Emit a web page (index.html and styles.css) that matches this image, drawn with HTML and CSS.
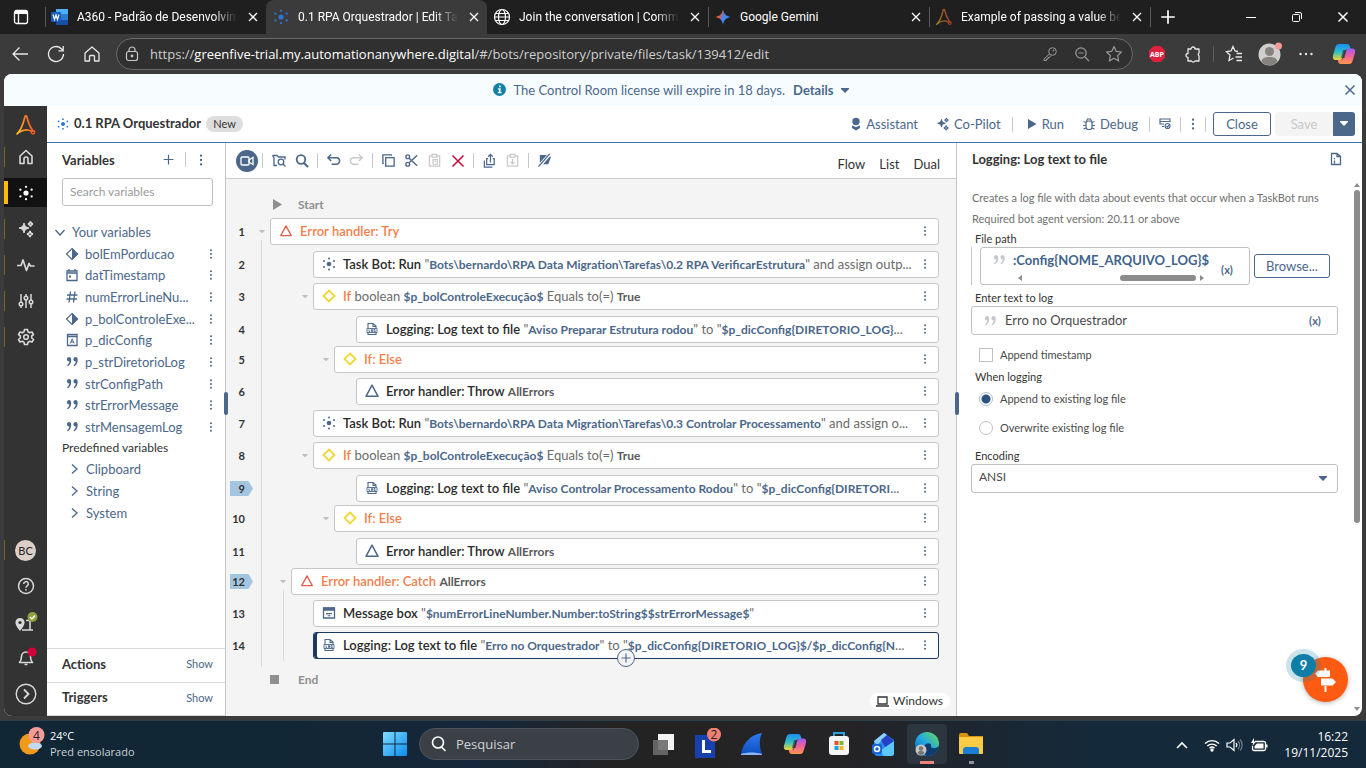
FILE: index.html
```
<!DOCTYPE html>
<html lang="pt-BR">
<head>
    <meta charset="UTF-8">
    <meta name="viewport" content="width=device-width, initial-scale=1.0">
    <title>0.1 RPA Orquestrador | Edit Task Bot</title>
    <link rel="stylesheet" href="styles.css">
</head>
<body>
    <!-- Icons -->
    <svg class="sprite" xmlns="http://www.w3.org/2000/svg">
        <defs>
            <linearGradient id="g-logo" x1="0" y1="0.6" x2="1" y2="0.4"><stop offset="0" stop-color="#ffb81c"/><stop offset="1" stop-color="#f05a28"/></linearGradient>
            <linearGradient id="g-gem" x1="0" y1="0.3" x2="1" y2="0.7"><stop offset="0" stop-color="#f4c20d"/><stop offset="0.3" stop-color="#f4503c"/><stop offset="0.5" stop-color="#4285f4"/><stop offset="1" stop-color="#3a8df0"/></linearGradient>
            <linearGradient id="g-win" x1="0" y1="0" x2="1" y2="1"><stop offset="0" stop-color="#7fdcff"/><stop offset="1" stop-color="#0a8cf0"/></linearGradient>
            <linearGradient id="g-cop1" x1="0" y1="0" x2="0" y2="1"><stop offset="0" stop-color="#1a8cf0"/><stop offset="0.5" stop-color="#2cc0c8"/><stop offset="1" stop-color="#f5d430"/></linearGradient>
            <linearGradient id="g-cop2" x1="0" y1="0" x2="0" y2="1"><stop offset="0" stop-color="#a05af0"/><stop offset="0.5" stop-color="#f0609a"/><stop offset="1" stop-color="#ff9a4a"/></linearGradient>
            <linearGradient id="g-edge" x1="0" y1="1" x2="1" y2="0"><stop offset="0" stop-color="#0a5fb8"/><stop offset="0.5" stop-color="#22a8e0"/><stop offset="1" stop-color="#6ee04a"/></linearGradient>
            <linearGradient id="g-fin" x1="0" y1="0" x2="0" y2="1"><stop offset="0" stop-color="#2f7bf0"/><stop offset="1" stop-color="#0d4fc0"/></linearGradient>
        </defs>
        <symbol id="i-x" viewBox="0 0 16 16"><path d="M4 4l8 8M12 4l-8 8" fill="none" stroke="currentColor" stroke-width="1.3"/></symbol>
        <symbol id="i-bot" viewBox="0 0 16 16"><g fill="currentColor"><circle cx="8" cy="8" r="2.3"/><circle cx="8" cy="2.5" r="1"/><circle cx="8" cy="13.5" r="1"/><circle cx="3" cy="5" r="1"/><circle cx="13" cy="5" r="1"/><circle cx="3" cy="11" r="1"/><circle cx="13" cy="11" r="1"/></g></symbol>
        <symbol id="i-logo" viewBox="0 0 20 22"><path d="M1 20C4 17 7.500 9 9 2.500c.3-1 1.500-1 1.800 0C12 8 14 13 17 17M1 20c3-3 9-6 15-2.500" fill="none" stroke="url(#g-logo)" stroke-width="1.700" stroke-linecap="round"/><circle cx="17" cy="18.300" r="1.700" fill="none" stroke="#f05a28" stroke-width="1.500"/></symbol>
        <symbol id="i-dots" viewBox="0 0 16 16"><g fill="currentColor"><circle cx="8" cy="3" r="1.300"/><circle cx="8" cy="8" r="1.300"/><circle cx="8" cy="13" r="1.300"/></g></symbol>
        <symbol id="i-plus" viewBox="0 0 16 16"><path d="M8 2v12M2 8h12" fill="none" stroke="currentColor" stroke-width="1.500"/></symbol>
        <symbol id="i-caret" viewBox="0 0 8 6"><path d="M0 0h8v1L4 5 0 1z" fill="currentColor"/></symbol>
        <symbol id="i-down" viewBox="0 0 12 12"><path d="M1.500 4L6 9l4.500-5" fill="none" stroke="currentColor" stroke-width="1.300"/></symbol>
        <symbol id="i-right" viewBox="0 0 12 12"><path d="M4 1.500L9 6l-5 4.500" fill="none" stroke="currentColor" stroke-width="1.300"/></symbol>
        <symbol id="i-search" viewBox="0 0 16 16"><circle cx="7" cy="6.500" r="4.300" fill="none" stroke="currentColor" stroke-width="1.800"/><path d="M10 10l4 4" stroke="currentColor" stroke-width="2.200"/></symbol>
        <symbol id="i-quote" viewBox="0 0 14 12"><path d="M4 1a2.300 2.300 0 1 0 .4 4.600C4.200 7.200 3.400 8.300 2 9.400l.8.900C5 8.800 6.200 6.800 6.200 3.900 6.200 2 5.400 1 4 1zM10.500 1a2.300 2.300 0 1 0 .4 4.600c-.2 1.600-1 2.700-2.400 3.800l.8.900c2.200-1.500 3.400-3.500 3.400-6.400C12.700 2 11.900 1 10.500 1z" fill="currentColor"/></symbol>
        <symbol id="i-bool" viewBox="0 0 14 14"><path d="M7 1.500L12.500 7 7 12.500 1.500 7z" fill="none" stroke="currentColor" stroke-width="1.200"/><path d="M7 1l6 6-6 6z" fill="currentColor"/></symbol>
        <symbol id="i-date" viewBox="0 0 14 14"><path d="M2 3h10v9.500H2zM2 5h10M4 1v2M10 1v2" fill="none" stroke="currentColor" stroke-width="1.300"/><path d="M4 7.500h2v2H4z" fill="currentColor"/></symbol>
        <symbol id="i-hash" viewBox="0 0 14 14"><path d="M5.500 1.500L4 12.500M10 1.500L8.500 12.500M2 5h10.500M1.500 9h10.500" fill="none" stroke="currentColor" stroke-width="1.300"/></symbol>
        <symbol id="i-dict" viewBox="0 0 14 14"><path d="M2.500 1.500h9.500v11H2.500zM2.500 3.500H12" fill="none" stroke="currentColor" stroke-width="1.300"/><path d="M5.300 10.500L7.200 5.800l1.900 4.700M6 9h2.500" fill="none" stroke="currentColor"/></symbol>
        <symbol id="i-tri" viewBox="0 0 16 16"><path d="M8 2.200L14 13.300H2z" fill="none" stroke="currentColor" stroke-width="1.500" stroke-linejoin="round"/></symbol>
        <symbol id="i-diamond" viewBox="0 0 16 16"><path d="M8 2.500L13.500 8 8 13.500 2.500 8z" fill="none" stroke="currentColor" stroke-width="1.800"/></symbol>
        <symbol id="i-log" viewBox="0 0 16 16"><path d="M4 7V2.500h5L12 5v2M9 2.500V5.500h3M4 12v1.500h8V12" fill="none" stroke="currentColor" stroke-width="1.100"/><path d="M3 7.500h10v4H3zM5 8.500v2h1.200M7.500 8.500h1v2h-1zM11.300 8.500H10v2h1.300v-1" fill="none" stroke="currentColor" stroke-width=".9"/></symbol>
        <symbol id="i-msg" viewBox="0 0 16 16"><path d="M2.500 3h11v10h-11z" fill="none" stroke="currentColor" stroke-width="1.300"/><path d="M2 2.500h12v3.300H2zM5 8h6v1.300H5zM6.500 10.300h3v1h-3z" fill="currentColor"/></symbol>
        <symbol id="i-spark" viewBox="0 0 18 18"><path d="M7 3c.6 3 1.800 4.300 5 5-3.200.7-4.400 2-5 5-.6-3-1.800-4.300-5-5 3.200-.7 4.400-2 5-5z" fill="currentColor" stroke="currentColor" stroke-width="1"/><path d="M13.500 1.500c.3 1.500.9 2.200 2.500 2.500-1.600.3-2.200 1-2.500 2.500-.3-1.500-.9-2.200-2.500-2.500 1.600-.3 2.200-1 2.500-2.500zM13 11c.4 1.900 1.100 2.700 3 3-1.900.4-2.600 1.100-3 3-.4-1.900-1.100-2.600-3-3 1.900-.3 2.600-1.100 3-3z" fill="none" stroke="currentColor" stroke-width="1.500"/></symbol>
        <symbol id="i-home" viewBox="0 0 18 18"><path d="M3 8l6-5.500L15 8v7.500h-4V11a2 2 0 0 0-4 0v4.500H3z" fill="none" stroke="currentColor" stroke-width="1.600" stroke-linejoin="round"/></symbol>
        <symbol id="i-copilot" viewBox="0 0 24 24"><path d="M7 2h8c2 0 2.500 1 3 3l.5 2h-3c-1.500 0-2.500 1-3 2.500L10.500 16c-.6 1.500-1.300 2-3 2H4c-3 0-3.500-2-3-4.500L3.500 5C4 3 5 2 7 2z" fill="url(#g-cop1)"/><path d="M17 22H9c-2 0-2.700-1-3-3l-.3-1H8c2 0 3-.8 3.500-2.500L13.500 9c.6-1.600 1.500-2.500 3-2.500H20c3 0 3.500 2 3 4.500L20.500 19c-.5 2-1.500 3-3.500 3z" fill="url(#g-cop2)"/><path d="M11 8h3.500l-2 8H9z" fill="#202430" opacity=".6"/></symbol>
    </svg>

    <!-- Browser tabs -->
    <header class="tabs">
        <button class="tab-actions" aria-label="Tab actions"><svg width="16" height="16" viewBox="0 0 16 16"><path d="M1.500 3.500a2 2 0 0 1 2-2h9a2 2 0 0 1 2 2v9a2 2 0 0 1-2 2h-9a2 2 0 0 1-2-2zM5.500 5v9.500" fill="none" stroke="#fff" stroke-width="1.300"/><path d="M2 2h12v3H2z" fill="#fff"/></svg></button>
        <div class="tab tab-line">
            <svg width="18" height="18" viewBox="0 0 18 18"><path d="M5 1h12v5H5z" fill="#4fb0f5"/><path d="M5 6h12v6H5z" fill="#2b7cd3"/><path d="M5 12h12v5H5z" fill="#174ea6"/><rect x="0" y="4" width="10" height="10" rx="1" fill="#185abd"/><path d="M2 6.500l1.500 5L5 7l1.500 4.500L8 6.500" fill="none" stroke="#fff" stroke-width="1.200"/></svg>
            <span class="tab-title faded">A360 - Padrão de Desenvolvim</span>
            <button class="tab-close" aria-label="Close tab"><svg width="16" height="16"><use href="#i-x"/></svg></button>
        </div>
        <div class="tab tab-active">
            <svg class="c-bot" width="18" height="18"><use href="#i-bot"/></svg>
            <span class="tab-title faded">0.1 RPA Orquestrador | Edit Tas</span>
            <button class="tab-close" aria-label="Close tab"><svg width="16" height="16"><use href="#i-x"/></svg></button>
        </div>
        <div class="tab">
            <svg width="18" height="18" viewBox="0 0 18 18" fill="none" stroke="#fff" stroke-width="1.200"><circle cx="9" cy="9" r="7.500"/><ellipse cx="9" cy="9" rx="3.500" ry="7.500"/><path d="M1.500 9h15M2.500 5.500h13M2.500 12.500h13"/></svg>
            <span class="tab-title faded">Join the conversation | Commu</span>
            <button class="tab-close" aria-label="Close tab"><svg width="16" height="16"><use href="#i-x"/></svg></button>
        </div>
        <div class="tab tab-line">
            <svg width="18" height="16" viewBox="0 0 18 16"><path d="M9 0c.8 5 3 7.200 8 8-5 .8-7.200 3-8 8-.8-5-3-7.200-8-8 5-.8 7.200-3 8-8z" fill="url(#g-gem)"/></svg>
            <span class="tab-title">Google Gemini</span>
            <button class="tab-close" aria-label="Close tab"><svg width="16" height="16"><use href="#i-x"/></svg></button>
        </div>
        <div class="tab tab-line">
            <svg class="dim" width="18" height="18"><use href="#i-logo"/></svg>
            <span class="tab-title faded">Example of passing a value be</span>
            <button class="tab-close" aria-label="Close tab"><svg width="16" height="16"><use href="#i-x"/></svg></button>
        </div>
        <button class="new-tab tab-line" aria-label="New tab"><svg width="18" height="18"><use href="#i-plus"/></svg></button>
        <div class="win-controls">
            <button aria-label="Minimize"><svg width="12" height="12" viewBox="0 0 12 12"><path d="M1 6.500h10" stroke="#fff"/></svg></button>
            <button aria-label="Restore"><svg width="12" height="12" viewBox="0 0 12 12" fill="none" stroke="#fff"><rect x="1.500" y="3.500" width="7" height="7" rx="1"/><path d="M4 1.500h5a1.500 1.500 0 0 1 1.500 1.500v5"/></svg></button>
            <button aria-label="Close window"><svg width="18" height="18"><use href="#i-x"/></svg></button>
        </div>
    </header>

    <!-- Address bar -->
    <div class="toolbar">
        <button class="tool" aria-label="Back"><svg width="18" height="18" viewBox="0 0 18 18" fill="none" stroke="currentColor" stroke-width="1.300"><path d="M17 9H2M8.500 2.500L2 9l6.500 6.500"/></svg></button>
        <button class="tool" aria-label="Refresh"><svg width="18" height="18" viewBox="0 0 18 18" fill="none" stroke="currentColor" stroke-width="1.300"><path d="M16.500 9a7.500 7.500 0 1 1-2.200-5.300L16 5.500M16.200 1v4.800h-4.800"/></svg></button>
        <button class="tool" aria-label="Home"><svg width="18" height="18" viewBox="0 0 18 18" fill="none" stroke="currentColor" stroke-width="1.300" stroke-linejoin="round"><path d="M2 8l7-6 7 6v8h-4.500v-4.500a1 1 0 0 0-1-1h-3a1 1 0 0 0-1 1V16H2z"/></svg></button>
        <div class="address">
            <svg class="lock" width="16" height="16" viewBox="0 0 16 16" fill="none" stroke="currentColor" stroke-width="1.200"><rect x="2.500" y="5.500" width="11" height="9" rx="2"/><path d="M5 5.500V4a3 3 0 0 1 6 0v1.500"/><circle cx="8" cy="10" r=".8" fill="currentColor"/></svg>
            <div class="url"><span>https://</span>greenfive-trial.my.automationanywhere.digital<span>/#/bots/repository/private/files/task/139412/edit</span></div>
            <button aria-label="Passwords"><svg width="16" height="16" viewBox="0 0 16 16" fill="none" stroke="currentColor"><circle cx="10.500" cy="5.500" r="3.800"/><path d="M7.500 8l-5.500 5v1.500h2.500v-1.500H6v-1.500h1.500L9 9.500"/><circle cx="11.500" cy="4.500" r=".5"/></svg></button>
            <button aria-label="Zoom"><svg width="16" height="16" viewBox="0 0 16 16" fill="none" stroke="currentColor" stroke-width="1.200"><circle cx="7" cy="7" r="5.200"/><path d="M4.500 7h5M11 11l4 4"/></svg></button>
            <button aria-label="Add to favorites"><svg width="18" height="18" viewBox="0 0 18 18" fill="none" stroke="currentColor" stroke-width="1.200" stroke-linejoin="round"><path d="M9 1.500l2.300 4.900 5.200.6-3.900 3.600 1.100 5.400L9 13.300 4.300 16l1.100-5.400L1.500 7l5.200-.6z"/></svg></button>
        </div>
        <button class="tool" aria-label="Adblock Plus"><svg width="18" height="18" viewBox="0 0 18 18"><path d="M5.500 1h7L17 5.500v7L12.500 17h-7L1 12.500v-7z" fill="#e0203f"/><text x="9" y="12" class="abp">ABP</text></svg></button>
        <button class="tool" aria-label="Extensions"><svg width="18" height="18" viewBox="0 0 18 18" fill="none" stroke="currentColor" stroke-width="1.300" stroke-linejoin="round"><path d="M4 4h3a2 2 0 0 1 4 0h4v4a2 2 0 0 0 0 3v5h-4a2 2 0 0 1-3.500 0H4v-3.500a2 2 0 0 1 0-4z"/></svg></button>
        <span class="sep-dark"></span>
        <button class="tool" aria-label="Favorites"><svg width="18" height="18" viewBox="0 0 18 18" fill="none" stroke="currentColor" stroke-width="1.300"><path d="M13 6.500l-3-.5L8 1.500 6 6l-4.500.6L5 10l-1 5.500 4.500-2.500M11.500 8.500H17M10.500 12H17M11.500 15.500H17"/></svg></button>
        <button class="tool" aria-label="Profile"><svg width="24" height="24" viewBox="0 0 24 24"><circle cx="11.500" cy="12.500" r="11" fill="#d0cfcd"/><circle cx="11.500" cy="9.500" r="4.500" fill="#85827f"/><path d="M3.500 19.500c1-4 4-4.500 8-4.500s7 .5 8 4.500c-4 5-12 5-16 0z" fill="#85827f"/><circle cx="20.500" cy="4" r="3.500" fill="#f59a94"/></svg></button>
        <button class="tool" aria-label="Settings and more"><svg width="16" height="16" viewBox="0 0 16 16" fill="currentColor"><circle cx="2.500" cy="8" r="1.200"/><circle cx="8" cy="8" r="1.200"/><circle cx="13.500" cy="8" r="1.200"/></svg></button>
        <button class="tool" aria-label="Copilot"><svg width="24" height="24"><use href="#i-copilot"/></svg></button>
    </div>

    <!-- Control Room -->
    <div class="app">
        <div class="banner">
            <svg width="13" height="13" viewBox="0 0 13 13"><circle cx="6.500" cy="6.500" r="6.500" fill="#1181a8"/><path d="M6 2.500h1.700v1.700H6zM5 5.300h2.600v3.600h1v1.300H4.800V8.900h1V6.500H5z" fill="#fff"/></svg>
            <span>The Control Room license will expire in 18 days.</span>
            <a href="#">Details</a>
            <svg class="caret" width="8" height="6"><use href="#i-caret"/></svg>
            <button aria-label="Dismiss"><svg width="18" height="18"><use href="#i-x"/></svg></button>
        </div>

        <div class="workspace">
            <nav class="rail">
                <a class="rail-logo" href="#" aria-label="Automation Anywhere"><svg width="20" height="22"><use href="#i-logo"/></svg></a>
                <a class="rail-item marked" href="#" aria-label="Home"><svg width="18" height="18"><use href="#i-home"/></svg></a>
                <a class="rail-item current" href="#" aria-label="Automation"><svg width="18" height="18"><use href="#i-bot"/></svg></a>
                <a class="rail-item marked" href="#" aria-label="AI"><svg width="18" height="18"><use href="#i-spark"/></svg></a>
                <a class="rail-item marked" href="#" aria-label="Activity"><svg width="18" height="18" viewBox="0 0 18 18"><path d="M0 9.500h4l2-5.500 3.500 10.500 2.500-7 1.500 2.500h4" fill="none" stroke="currentColor" stroke-width="1.700" stroke-linejoin="round"/></svg></a>
                <a class="rail-item marked" href="#" aria-label="Manage"><svg width="18" height="18" viewBox="0 0 18 18" fill="none" stroke="currentColor" stroke-width="1.500"><path d="M4 2v8M4 14v2M9 2v2M9 8v8M14 2v6M14 12v4"/><circle cx="4" cy="12" r="1.800"/><circle cx="9" cy="6" r="1.800"/><circle cx="14" cy="10" r="1.800"/></svg></a>
                <a class="rail-item marked" href="#" aria-label="Administration"><svg width="18" height="18" viewBox="0 0 18 18" fill="none" stroke="currentColor" stroke-width="1.600" stroke-linejoin="round"><path d="M7.500 1.500h3l.5 2.300 1.700 1 2.300-.8 1.500 2.600L14.700 8v2l1.800 1.500L15 14l-2.300-.7-1.700 1-.5 2.200h-3L7 14.300l-1.700-1L3 14l-1.500-2.500L3.300 10V8L1.500 6.600 3 4l2.300.8 1.700-1z"/><circle cx="9" cy="9" r="2.300"/></svg></a>
                <a class="rail-item marked rail-bottom" href="#"><span class="avatar">BC</span></a>
                <a class="rail-item" href="#" aria-label="Help"><svg width="18" height="18" viewBox="0 0 18 18" fill="none" stroke="currentColor" stroke-width="1.500"><circle cx="9" cy="9" r="7.500"/><path d="M6.700 7a2.300 2.300 0 1 1 3.500 1.900C9.400 9.400 9 9.700 9 10.700M9 12v1.600"/></svg></a>
                <a class="rail-item" href="#" aria-label="Pathfinder"><svg width="24" height="22" viewBox="0 0 24 22"><path d="M6 7a4.600 4.600 0 0 1 4.600 4.600C10.600 15 6 20 6 20s-4.600-5-4.600-8.400A4.600 4.600 0 0 1 6 7z" fill="currentColor"/><circle cx="6" cy="11.500" r="1.600" fill="#333"/><path d="M8 19h11M12 9.500h4V19" fill="none" stroke="currentColor" stroke-width="1.600"/><circle cx="18.500" cy="6" r="5" fill="#8ba33a"/><path d="M16 6l2 2 3-3.500" fill="none" stroke="#fff" stroke-width="1.400"/></svg></a>
                <a class="rail-item" href="#" aria-label="Notifications"><svg width="22" height="22" viewBox="0 0 22 22"><path d="M4.500 15.500c1.500-1.500 2-3 2-6a4.500 4.500 0 0 1 9 0c0 3 .5 4.500 2 6zM9.500 17.500h3" fill="none" stroke="currentColor" stroke-width="1.600" stroke-linejoin="round"/><circle cx="17" cy="5" r="4.500" fill="#d50037"/></svg></a>
                <a class="rail-item" href="#" aria-label="Expand"><svg width="22" height="22" viewBox="0 0 22 22" fill="none" stroke="currentColor" stroke-width="1.400"><circle cx="11" cy="11" r="9.800"/><path d="M9 6.500l4.500 4.500L9 15.500" stroke-width="1.800"/></svg></a>
            </nav>

            <main class="editor">
                <div class="editor-head">
                    <svg class="c-bot" width="14" height="14"><use href="#i-bot"/></svg>
                    <h1>0.1 RPA Orquestrador</h1>
                    <span class="pill">New</span>
                    <div class="head-actions">
                        <button class="link-btn"><svg width="12" height="14" viewBox="0 0 12 14" fill="currentColor"><circle cx="6" cy="4.500" r="3.700"/><path d="M2 8.500l4 1.500 4-1.500v2.500l-4 2.500-4-2.500z"/></svg>Assistant</button>
                        <button class="link-btn"><svg width="14" height="14"><use href="#i-spark"/></svg>Co-Pilot</button>
                        <span class="sep sep-text"></span>
                        <button class="link-btn"><svg width="12" height="12" viewBox="0 0 12 12" fill="currentColor"><path d="M2 1l8.500 5L2 11z"/></svg>Run</button>
                        <button class="link-btn"><svg width="14" height="14" viewBox="0 0 14 14" fill="none" stroke="currentColor" stroke-width="1.200"><rect x="4" y="4" width="6" height="8.500" rx="2.500"/><path d="M4.500 4L5.500 2h3l1 2M4 5.500L1.500 4.500M4 8.500H1M4 11l-2.500 1M10 5.500l2.500-1M10 8.500h3M10 11l2.500 1"/></svg>Debug</button>
                        <span class="sep sep-icon"></span>
                        <button class="icon-only icon-wide" aria-label="Validate"><svg width="14" height="14" viewBox="0 0 14 14" fill="none" stroke="currentColor" stroke-width="1.200"><path d="M12 5V2H2v5h4M2 4.500h10M4 9.500h2"/><circle cx="9.500" cy="9" r="2.500"/><path d="M8.500 9l1 1 1.500-2"/></svg></button>
                        <span class="sep"></span>
                        <button class="icon-only" aria-label="More"><svg width="16" height="14"><use href="#i-dots"/></svg></button>
                        <span class="sep"></span>
                        <button class="btn btn-close">Close</button>
                        <button class="btn btn-save" disabled>Save</button>
                        <button class="btn-drop" aria-label="Save options"><svg width="8" height="6"><use href="#i-caret"/></svg></button>
                    </div>
                </div>

                <div class="panels">
                    <aside class="variables">
                        <div class="var-head">
                            <h2>Variables</h2>
                            <button aria-label="Create variable"><svg width="13" height="13"><use href="#i-plus"/></svg></button>
                            <span class="sep"></span>
                            <button aria-label="Variable menu"><svg width="16" height="14"><use href="#i-dots"/></svg></button>
                        </div>
                        <input class="var-search" type="text" placeholder="Search variables" aria-label="Search variables">
                        <div class="var-group"><svg width="12" height="12"><use href="#i-down"/></svg>Your variables</div>
                        <ul class="var-list">
                            <li><svg width="14" height="14"><use href="#i-bool"/></svg><a href="#">bolEmPorducao</a><button aria-label="Options"><svg width="12" height="12"><use href="#i-dots"/></svg></button></li>
                            <li><svg width="14" height="14"><use href="#i-date"/></svg><a href="#">datTimestamp</a><button aria-label="Options"><svg width="12" height="12"><use href="#i-dots"/></svg></button></li>
                            <li><svg width="14" height="14"><use href="#i-hash"/></svg><a href="#">numErrorLineNu...</a><button aria-label="Options"><svg width="12" height="12"><use href="#i-dots"/></svg></button></li>
                            <li><svg width="14" height="14"><use href="#i-bool"/></svg><a href="#">p_bolControleExe...</a><button aria-label="Options"><svg width="12" height="12"><use href="#i-dots"/></svg></button></li>
                            <li><svg width="14" height="14"><use href="#i-dict"/></svg><a href="#">p_dicConfig</a><button aria-label="Options"><svg width="12" height="12"><use href="#i-dots"/></svg></button></li>
                            <li><svg width="14" height="12"><use href="#i-quote"/></svg><a href="#">p_strDiretorioLog</a><button aria-label="Options"><svg width="12" height="12"><use href="#i-dots"/></svg></button></li>
                            <li><svg width="14" height="12"><use href="#i-quote"/></svg><a href="#">strConfigPath</a><button aria-label="Options"><svg width="12" height="12"><use href="#i-dots"/></svg></button></li>
                            <li><svg width="14" height="12"><use href="#i-quote"/></svg><a href="#">strErrorMessage</a><button aria-label="Options"><svg width="12" height="12"><use href="#i-dots"/></svg></button></li>
                            <li><svg width="14" height="12"><use href="#i-quote"/></svg><a href="#">strMensagemLog</a><button aria-label="Options"><svg width="12" height="12"><use href="#i-dots"/></svg></button></li>
                        </ul>
                        <h3>Predefined variables</h3>
                        <ul class="pre-list">
                            <li><svg width="12" height="12"><use href="#i-right"/></svg><a href="#">Clipboard</a></li>
                            <li><svg width="12" height="12"><use href="#i-right"/></svg><a href="#">String</a></li>
                            <li><svg width="12" height="12"><use href="#i-right"/></svg><a href="#">System</a></li>
                        </ul>
                        <div class="fold fold-first"><h2>Actions</h2><a href="#">Show</a></div>
                        <div class="fold"><h2>Triggers</h2><a href="#">Show</a></div>
                        <span class="grip"></span>
                    </aside>

                    <section class="flow">
                        <div class="flow-bar">
                            <button class="rec" aria-label="Record"><svg width="14" height="10" viewBox="0 0 14 10" fill="none" stroke="#fff" stroke-width="1.300"><rect x="1" y="1" width="8" height="8" rx="1"/><path d="M9 4l4-2.500v7L9 6z"/></svg></button>
                            <span class="sep"></span>
                            <button aria-label="Find in files"><svg width="16" height="16" viewBox="0 0 16 16" fill="none" stroke="currentColor" stroke-width="1.300"><path d="M6 12.500H3V4.500M1.500 2.500H6l1.500 1.500H14v2.500M1.500 2.500L3 5"/><circle cx="10" cy="9" r="2.800"/><path d="M12 11l2.500 2.500"/></svg></button>
                            <button aria-label="Find"><svg width="16" height="16"><use href="#i-search"/></svg></button>
                            <span class="sep"></span>
                            <button aria-label="Undo"><svg width="15" height="15" viewBox="0 0 16 16" fill="none" stroke="currentColor" stroke-width="1.600"><path d="M2 5h9a3.500 3.500 0 0 1 0 7H6M5.500 1.500L2 5l3.500 3.500"/></svg></button>
                            <button class="off" aria-label="Redo"><svg width="15" height="15" viewBox="0 0 16 16" fill="none" stroke="currentColor" stroke-width="1.600"><path d="M14 5H5a3.500 3.500 0 0 0 0 7h5M10.500 1.500L14 5l-3.500 3.500"/></svg></button>
                            <span class="sep"></span>
                            <button aria-label="Copy"><svg width="15" height="15" viewBox="0 0 16 16" fill="none" stroke="currentColor" stroke-width="1.400"><rect x="5" y="5" width="9" height="9"/><path d="M3 11H2V2h9v1"/></svg></button>
                            <button aria-label="Cut"><svg width="15" height="15" viewBox="0 0 16 16" fill="none" stroke="currentColor" stroke-width="1.500"><circle cx="4" cy="4" r="2"/><circle cx="4" cy="12" r="2"/><path d="M5.500 5.500L14 13.500M5.500 10.500L14 2.500"/></svg></button>
                            <button class="off" aria-label="Paste"><svg width="15" height="15" viewBox="0 0 16 16" fill="none" stroke="currentColor" stroke-width="1.300"><path d="M5 3H2.500v11h11V3H11M5.500 1.500h5v3h-5z"/><path d="M6.500 7h4.500v5H6.500zM8 9h1.500"/></svg></button>
                            <button class="del" aria-label="Delete"><svg width="16" height="16" viewBox="0 0 16 16"><path d="M2.500 2.500l11 11M13.500 2.500l-11 11" stroke="currentColor" stroke-width="1.600"/></svg></button>
                            <span class="sep"></span>
                            <button aria-label="Share"><svg width="15" height="15" viewBox="0 0 16 16" fill="none" stroke="currentColor" stroke-width="1.300"><path d="M6.500 6H5v6.500h8V6h-1.500M9 10V2M6.500 4L9 1.500 11.500 4M2.500 8v7H11"/></svg></button>
                            <button class="off" aria-label="Import"><svg width="15" height="15" viewBox="0 0 16 16" fill="none" stroke="currentColor" stroke-width="1.300"><path d="M5 3H2.500v11h11V3H11M5.500 1.500h5v3h-5zM8 6.500v5M5.800 9.500L8 11.700l2.200-2.200"/></svg></button>
                            <span class="sep"></span>
                            <button aria-label="Disable"><svg width="15" height="15" viewBox="0 0 16 16"><path d="M3 2h7.500L3 10.500zM13.500 4H15l-3 8H6.500z" fill="currentColor"/><path d="M1.500 14.500L13.500 1" stroke="currentColor" stroke-width="1.400"/></svg></button>
                            <div class="views"><a href="#">Flow</a><a href="#">List</a><a href="#">Dual</a></div>
                        </div>

                        <div class="canvas">
                            <div class="edge-row"><svg width="9" height="11" viewBox="0 0 9 11"><path d="M0 0l9 5.500L0 11z" fill="#8f8f8f"/></svg>Start</div>
                            <ol class="lines">
                                <li class="line open"><span class="no">1</span><span class="fold-mark"><svg width="6" height="4"><use href="#i-caret"/></svg></span>
                                    <div class="node"><svg class="red" width="16" height="14"><use href="#i-tri"/></svg><p><b class="kw">Error handler: Try</b></p><button aria-label="Options"><svg width="12" height="12"><use href="#i-dots"/></svg></button></div></li>
                                <li class="line d2"><span class="no">2</span><span class="fold-mark"></span>
                                    <div class="node"><svg width="16" height="16"><use href="#i-bot"/></svg><p><b>Task Bot: Run</b> "<i>Bots\bernardo\RPA Data Migration\Tarefas\0.2 RPA VerificarEstrutura</i>" and assign outp...</p><button aria-label="Options"><svg width="12" height="12"><use href="#i-dots"/></svg></button></div></li>
                                <li class="line d2 open"><span class="no">3</span><span class="fold-mark"><svg width="6" height="4"><use href="#i-caret"/></svg></span>
                                    <div class="node"><svg class="yellow" width="16" height="16"><use href="#i-diamond"/></svg><p><b class="kw">If</b> boolean <i>$p_bolControleExecução$</i> Equals to(=) <em>True</em></p><button aria-label="Options"><svg width="12" height="12"><use href="#i-dots"/></svg></button></div></li>
                                <li class="line d4"><span class="no">4</span><span class="fold-mark"></span>
                                    <div class="node"><svg width="16" height="16"><use href="#i-log"/></svg><p><b>Logging: Log text to file</b> "<i>Aviso Preparar Estrutura rodou</i>" to "<i>$p_dicConfig{DIRETORIO_LOG}</i>...</p><button aria-label="Options"><svg width="12" height="12"><use href="#i-dots"/></svg></button></div></li>
                                <li class="line d3 branch"><span class="no">5</span><span class="fold-mark"><svg width="6" height="4"><use href="#i-caret"/></svg></span>
                                    <div class="node"><svg class="yellow" width="16" height="16"><use href="#i-diamond"/></svg><p><b class="kw">If: Else</b></p><button aria-label="Options"><svg width="12" height="12"><use href="#i-dots"/></svg></button></div></li>
                                <li class="line d4"><span class="no">6</span><span class="fold-mark"></span>
                                    <div class="node"><svg width="16" height="16"><use href="#i-tri"/></svg><p><b>Error handler: Throw</b> <em>AllErrors</em></p><button aria-label="Options"><svg width="12" height="12"><use href="#i-dots"/></svg></button></div></li>
                                <li class="line d2"><span class="no">7</span><span class="fold-mark"></span>
                                    <div class="node"><svg width="16" height="16"><use href="#i-bot"/></svg><p><b>Task Bot: Run</b> "<i>Bots\bernardo\RPA Data Migration\Tarefas\0.3 Controlar Processamento</i>" and assign o...</p><button aria-label="Options"><svg width="12" height="12"><use href="#i-dots"/></svg></button></div></li>
                                <li class="line d2 open"><span class="no">8</span><span class="fold-mark"><svg width="6" height="4"><use href="#i-caret"/></svg></span>
                                    <div class="node"><svg class="yellow" width="16" height="16"><use href="#i-diamond"/></svg><p><b class="kw">If</b> boolean <i>$p_bolControleExecução$</i> Equals to(=) <em>True</em></p><button aria-label="Options"><svg width="12" height="12"><use href="#i-dots"/></svg></button></div></li>
                                <li class="line d4 stop"><span class="no">9</span><span class="fold-mark"></span>
                                    <div class="node"><svg width="16" height="16"><use href="#i-log"/></svg><p><b>Logging: Log text to file</b> "<i>Aviso Controlar Processamento Rodou</i>" to "<i>$p_dicConfig{DIRETORI</i>...</p><button aria-label="Options"><svg width="12" height="12"><use href="#i-dots"/></svg></button></div></li>
                                <li class="line d3 branch open"><span class="no">10</span><span class="fold-mark"><svg width="6" height="4"><use href="#i-caret"/></svg></span>
                                    <div class="node"><svg class="yellow" width="16" height="16"><use href="#i-diamond"/></svg><p><b class="kw">If: Else</b></p><button aria-label="Options"><svg width="12" height="12"><use href="#i-dots"/></svg></button></div></li>
                                <li class="line d4"><span class="no">11</span><span class="fold-mark"></span>
                                    <div class="node"><svg width="16" height="16"><use href="#i-tri"/></svg><p><b>Error handler: Throw</b> <em>AllErrors</em></p><button aria-label="Options"><svg width="12" height="12"><use href="#i-dots"/></svg></button></div></li>
                                <li class="line d1 branch stop"><span class="no">12</span><span class="fold-mark"><svg width="6" height="4"><use href="#i-caret"/></svg></span>
                                    <div class="node"><svg class="red" width="16" height="14"><use href="#i-tri"/></svg><p><b class="kw">Error handler: Catch</b> <em>AllErrors</em></p><button aria-label="Options"><svg width="12" height="12"><use href="#i-dots"/></svg></button></div></li>
                                <li class="line d2"><span class="no">13</span><span class="fold-mark"></span>
                                    <div class="node"><svg width="16" height="16"><use href="#i-msg"/></svg><p><b>Message box</b> "<i>$numErrorLineNumber.Number:toString$$strErrorMessage$</i>"</p><button aria-label="Options"><svg width="12" height="12"><use href="#i-dots"/></svg></button></div></li>
                                <li class="line d2"><span class="no">14</span><span class="fold-mark"></span>
                                    <div class="node selected"><svg width="16" height="16"><use href="#i-log"/></svg><p><b>Logging: Log text to file</b> "<i>Erro no Orquestrador</i>" to "<i>$p_dicConfig{DIRETORIO_LOG}$/$p_dicConfig{N</i>...</p><button aria-label="Options"><svg width="12" height="12"><use href="#i-dots"/></svg></button>
                                        <button class="add-here" aria-label="Add action"><svg width="12" height="12"><use href="#i-plus"/></svg></button></div></li>
                            </ol>
                            <div class="edge-row edge-end"><svg width="9" height="9" viewBox="0 0 9 9"><path d="M0 0h9v9H0z" fill="#8f8f8f"/></svg>End</div>
                            <div class="platform"><svg width="13" height="11" viewBox="0 0 13 11" fill="none" stroke="#333" stroke-width="1.300"><path d="M2 1h9v7H2zM0 10h13"/></svg>Windows</div>
                        </div>
                        <span class="grip"></span>
                    </section>

                    <section class="props">
                        <div class="props-head">
                            <h2>Logging: Log text to file</h2>
                            <button aria-label="Action details"><svg width="12" height="14" viewBox="0 0 12 14" fill="none" stroke="currentColor" stroke-width="1.300"><path d="M1.500 1.500h5.500l3.500 3v8h-9zM7 1.500v3h3.500M4.500 6v1.200M4.500 8.500v3"/></svg></button>
                        </div>
                        <p class="note">Creates a log file with data about events that occur when a TaskBot runs</p>
                        <p class="note">Required bot agent version: 20.11 or above</p>

                        <label for="path">File path</label>
                        <div class="path-row">
                            <div class="field field-path">
                                <svg class="q" width="14" height="12"><use href="#i-quote"/></svg>
                                <div class="path-text">
                                    <input id="path" type="text" value=":Config{NOME_ARQUIVO_LOG}$">
                                    <div class="hscroll"><svg width="4" height="6" viewBox="0 0 4 6"><path d="M4 0v6L0 3z"/></svg><span></span><svg width="4" height="6" viewBox="0 0 4 6"><path d="M0 0v6l4-3z"/></svg></div>
                                </div>
                                <button class="ins" aria-label="Insert variable">(x)</button>
                            </div>
                            <button class="btn btn-browse">Browse...</button>
                        </div>

                        <label for="text">Enter text to log</label>
                        <div class="field">
                            <svg class="q" width="14" height="12"><use href="#i-quote"/></svg>
                            <input id="text" type="text" value="Erro no Orquestrador">
                            <button class="ins" aria-label="Insert variable">(x)</button>
                        </div>

                        <div class="check"><input type="checkbox" id="stamp"><label for="stamp">Append timestamp</label></div>
                        <p class="legend">When logging</p>
                        <div class="check"><input type="radio" name="mode" id="append" checked><label for="append">Append to existing log file</label></div>
                        <div class="check check-last"><input type="radio" name="mode" id="overwrite"><label for="overwrite">Overwrite existing log file</label></div>

                        <label for="encoding">Encoding</label>
                        <div class="field field-select">
                            <select id="encoding"><option>ANSI</option></select>
                            <svg width="8" height="6"><use href="#i-caret"/></svg>
                        </div>

                        <span class="vscroll"></span>
                        <svg class="arrow-up" width="6" height="4" viewBox="0 0 6 4"><path d="M0 4h6L3 0z" fill="#8c8c8c"/></svg>
                        <svg class="arrow-down" width="6" height="4" viewBox="0 0 6 4"><path d="M0 0h6L3 4z" fill="#8c8c8c"/></svg>
                        <button class="guide" aria-label="Guides">
                            <svg width="22" height="24" viewBox="0 0 22 24" fill="#fff"><path d="M9.500 0h2v3h-2zM9.500 18h2v6h-2zM3 2.500h12v6.500H3L0 5.700zM6 10.500h11.500L21 14l-3.500 3.500H6z"/></svg>
                            <span>9</span>
                        </button>
                    </section>
                </div>
            </main>
        </div>
    </div>

    <!-- Taskbar -->
    <footer class="taskbar">
        <div class="weather">
            <svg width="28" height="28" viewBox="0 0 28 28"><circle cx="12" cy="17" r="10.500" fill="#f09a1a"/><ellipse cx="17" cy="19" rx="7" ry="3.500" fill="#c3d9f5"/><circle cx="18.500" cy="8" r="8" fill="#f79a9a"/><text x="18.500" y="12.500" class="badge-text">4</text></svg>
            <p>24°C<br><span>Pred ensolarado</span></p>
        </div>
        <div class="pins">
            <button aria-label="Start"><svg width="24" height="24" viewBox="0 0 24 24" fill="url(#g-win)"><path d="M0 1a1 1 0 0 1 1-1h10.500v11.500H0zM12.500 0H23a1 1 0 0 1 1 1v10.500H12.500zM0 12.500h11.500V24H1a1 1 0 0 1-1-1zM12.500 12.500H24V23a1 1 0 0 1-1 1H12.500z"/></svg></button>
            <div class="search"><svg width="18" height="18" viewBox="0 0 18 18" fill="none" stroke="#fff" stroke-width="1.600"><circle cx="8" cy="7.500" r="5.500"/><path d="M11.500 12l4 4"/></svg><input type="text" placeholder="Pesquisar" aria-label="Pesquisar"></div>
            <button aria-label="Task view"><svg width="24" height="24" viewBox="0 0 24 24"><path d="M7 2h16v16H7z" fill="#f2f2f2"/><path d="M2 8h15v15H2z" fill="#6b6b6b" opacity=".9"/></svg></button>
            <button aria-label="L"><svg width="30" height="32" viewBox="0 0 30 32"><path d="M3 7h20v23H3z" fill="#173fae"/><path d="M10 12h3v10h6v3h-9z" fill="#fff"/><circle cx="22" cy="6.500" r="7" fill="#f08073"/><text x="22" y="11" class="badge-text">2</text></svg></button>
            <button aria-label="Wireshark"><svg width="24" height="26" viewBox="0 0 24 26"><path d="M2 23C4 12 11 4 23 2c-3 6-3 13 0 21z" fill="url(#g-fin)"/><path d="M2 23c6-2 15-2 21 0v1H2z" fill="#8db4f5"/></svg></button>
            <button aria-label="Copilot"><svg width="24" height="24"><use href="#i-copilot"/></svg></button>
            <button aria-label="Store"><svg width="24" height="28" viewBox="0 0 24 28"><path d="M7 7V3h10v4" fill="none" stroke="#2ea0e0" stroke-width="2"/><rect x="2" y="6" width="20" height="19" rx="3" fill="#f5f5f5"/><path d="M7.500 11h4v4h-4z" fill="#e84e28"/><path d="M12.500 11h4v4h-4z" fill="#7db72f"/><path d="M7.500 16h4v4h-4z" fill="#1f9ee6"/><path d="M12.500 16h4v4h-4z" fill="#f5b51e"/></svg></button>
            <button aria-label="Outlook"><svg width="26" height="26" viewBox="0 0 26 26"><path d="M4 10l10-8 10 7v13a3 3 0 0 1-3 3H8a4 4 0 0 1-4-4z" fill="#2f8df0"/><path d="M4 10l10-8 3 2L7 14z" fill="#8cd0ff"/><path d="M24 10L10 20l4 5h7a3 3 0 0 0 3-3z" fill="#5cc8fa"/><path d="M11 9l6-5 7 6-9 6z" fill="#2740c8"/><rect x="2" y="13" width="10" height="10" rx="2" fill="#1464d2"/><circle cx="7" cy="18" r="2.500" fill="none" stroke="#fff" stroke-width="1.500"/></svg></button>
            <button class="running" aria-label="Edge"><svg width="26" height="26" viewBox="0 0 26 26"><circle cx="13" cy="13" r="12" fill="url(#g-edge)"/><path d="M13 25c-5-3-5-9-1-12 3-2 6 0 5 3 2 2 6 1 8-1-1 6-6 10-12 10z" fill="#0d3d70"/><circle cx="7" cy="19" r="5.500" fill="#c9c6c4"/><circle cx="7" cy="17.500" r="2.200" fill="#777"/><path d="M3.500 22c1-3 6-3 7 0-2 2.500-5 2.500-7 0z" fill="#777"/></svg></button>
            <button class="open-app" aria-label="Explorer"><svg width="26" height="26" viewBox="0 0 26 26"><path d="M1 4a2 2 0 0 1 2-2h6l2 3h14v7H1z" fill="#d9940e"/><path d="M1 6h24v16a1 1 0 0 1-1 1H2a1 1 0 0 1-1-1z" fill="#fbcb45"/><path d="M5 23v-4a3 3 0 0 1 3-3h10a3 3 0 0 1 3 3v4z" fill="#1a7fd4"/></svg></button>
        </div>
        <div class="tray">
            <svg width="12" height="8" viewBox="0 0 12 8" fill="none" stroke="#fff" stroke-width="1.600"><path d="M1 7l5-5 5 5"/></svg>
            <div class="status">
                <svg width="16" height="14" viewBox="0 0 16 14" fill="none" stroke="#fff" stroke-width="1.400"><path d="M1 5.500a10 10 0 0 1 14 0M3.300 8a6.800 6.800 0 0 1 9.400 0M5.500 10.300a3.600 3.600 0 0 1 5 0"/><circle cx="8" cy="12" r="1" fill="#fff"/></svg>
                <svg width="18" height="14" viewBox="0 0 18 14" fill="none" stroke="#fff" stroke-width="1.200"><path d="M1 5h3l4-3.500v11L4 9H1z"/><path d="M10 5a3 3 0 0 1 0 4"/><path d="M12 3a6 6 0 0 1 0 8M14 1.500a8 8 0 0 1 0 11" stroke="#77808a"/></svg>
                <svg width="18" height="14" viewBox="0 0 18 14"><path d="M5 3.500h9a1.500 1.500 0 0 1 1.500 1.500v6a1.500 1.500 0 0 1-1.500 1.500H4A1.500 1.500 0 0 1 2.500 11V8" fill="none" stroke="#fff" stroke-width="1.300"/><path d="M7 5.500h6.500v5h-9V8zM16 6.500h1.500v3H16zM4 0L1 5h2L2.500 8 6 3.500H4z" fill="#fff"/></svg>
            </div>
            <p>16:22<br>19/11/2025</p>
        </div>
    </footer>
</body>
</html>
```
FILE: styles.css
```
* {
    box-sizing: border-box;
}

body {
    margin: 0;
    height: 100vh;
    display: flex;
    flex-direction: column;
    overflow: hidden;
    background-color: #3b3b3b;
    color: #333;
    font-family: "Open Sans", sans-serif;
    font-size: 12px;
}

h1, h2, h3, p, ul, ol {
    margin: 0;
    padding: 0;
}

ul, ol {
    list-style: none;
}

button {
    display: flex;
    align-items: center;
    justify-content: center;
    padding: 0;
    border: 0;
    background: none;
    color: inherit;
    font: inherit;
    cursor: pointer;
}

a {
    color: inherit;
    text-decoration: none;
}

svg {
    display: block;
    flex-shrink: 0;
}

.sprite {
    position: absolute;
    width: 0;
    height: 0;
}

/* Browser tabs */
.tabs {
    display: flex;
    flex-shrink: 0;
    height: 34px;
    padding-bottom: 1px;
    background-color: #1f1f1f;
    color: #fff;
    font-family: Roboto, sans-serif;
}

.tab-actions {
    width: 45px;
    padding-right: 4px;
}

.tab {
    display: flex;
    align-items: center;
    gap: 8px;
    flex: 0 1 221px;
    min-width: 0;
    padding: 0 5px 0 6px;
}

.tab-line {
    background: linear-gradient(#5a5a5a, #5a5a5a) 0 7px / 1px 20px no-repeat;
}

.tab-active {
    margin-bottom: -1px;
    padding-bottom: 1px;
    background-color: #3b3b3b;
    border-radius: 8px 8px 0 0;
}

.tab-title {
    flex: 1;
    min-width: 0;
    white-space: nowrap;
}

.faded {
    -webkit-mask-image: linear-gradient(to right, #000 85%, transparent);
    mask-image: linear-gradient(to right, #000 85%, transparent);
}

.c-bot {
    color: #2f74d0;
}

.dim {
    opacity: 0.6;
}

.new-tab {
    width: 36px;
}

.win-controls {
    display: flex;
    margin-left: auto;
}

.win-controls button {
    width: 46px;
}

/* Address bar */
.toolbar {
    display: flex;
    align-items: center;
    flex-shrink: 0;
    height: 40px;
    padding: 0 4px 0 2px;
    color: #e8e8e8;
}

.tool {
    width: 36px;
    height: 32px;
}

.tool:last-child {
    margin-left: 2px;
}

.address {
    display: flex;
    align-items: center;
    flex: 1;
    height: 32px;
    margin: 0 6px;
    padding: 0 2px 0 7px;
    border: 1px solid #6a6a6a;
    border-radius: 16px;
    background-color: #303030;
    color: #9a9a9a;
}

.address button {
    width: 32px;
}

.lock {
    color: #c8c8c8;
}

.url {
    flex: 1;
    margin-left: 10px;
    color: #fff;
    font-size: 13px;
}

.url span {
    color: #cfcfcf;
}

.sep-dark {
    width: 1px;
    height: 16px;
    margin: 0 2px;
    background-color: #5c5c5c;
}

.abp {
    fill: #fff;
    font-size: 7px;
    font-weight: bold;
    text-anchor: middle;
}

/* Control Room */
.app {
    display: flex;
    flex-direction: column;
    flex: 1;
    min-height: 0;
    margin: 0 4px 4px;
    border-radius: 8px;
    overflow: hidden;
    background-color: #fff;
    color: #4b678a;
    font-family: Lato, sans-serif;
    font-size: 13px;
}

.banner {
    display: flex;
    align-items: center;
    justify-content: center;
    flex-shrink: 0;
    position: relative;
    height: 32px;
    padding-bottom: 1px;
    background-color: #f7fdfe;
}

.banner span {
    margin: 0 8px;
}

.banner a {
    font-weight: bold;
}

.banner .caret {
    margin: 3px 24px 0 8px;
}

.banner button {
    position: absolute;
    right: 3px;
}

.workspace {
    display: flex;
    flex: 1;
    min-height: 0;
}

.rail {
    display: flex;
    flex-direction: column;
    width: 43px;
    padding-bottom: 4px;
    background-color: #333;
    color: #d8d8d8;
}

.rail-logo {
    display: flex;
    align-items: center;
    justify-content: center;
    height: 33px;
    padding-top: 4px;
}

.rail-item {
    display: flex;
    align-items: center;
    justify-content: center;
    height: 36px;
}

.marked {
    background: linear-gradient(#7a6130, #7a6130) 0 8px / 1px 20px no-repeat;
}

.current {
    height: 29px;
    margin: 3px 0 4px;
    background: linear-gradient(#ffbc03, #ffbc03) 0 3px / 4px 23px no-repeat #111;
    color: #fff;
}

.rail-bottom {
    margin-top: auto;
}

.avatar {
    width: 21px;
    height: 21px;
    border-radius: 50%;
    background-color: #dccfc8;
    color: #222;
    font-size: 11px;
    line-height: 21px;
    text-align: center;
}

.editor {
    display: flex;
    flex-direction: column;
    flex: 1;
    min-width: 0;
}

.editor-head {
    display: flex;
    align-items: center;
    flex-shrink: 0;
    height: 37px;
    padding: 0 7px 0 9px;
    border-bottom: 1px solid #3d74b4;
}

h1 {
    margin: 0 5px 0 4px;
    padding-bottom: 3px;
    color: #333;
    font-size: 13px;
}

.pill {
    padding: 0 7px;
    border-radius: 8px;
    background-color: #dedede;
    color: #333;
    font-size: 11px;
    line-height: 16px;
}

.head-actions {
    display: flex;
    align-items: center;
    margin-left: auto;
}

.link-btn {
    gap: 4px;
    padding-bottom: 1px;
}

.link-btn + .link-btn {
    margin-left: 18px;
}

.icon-only {
    width: 16px;
}

.icon-wide {
    width: 22px;
}

.sep {
    width: 1px;
    height: 15px;
    margin: 0 4px;
    background-color: #c4c9ce;
}

.sep-text {
    margin: 0 13px 0 11px;
}

.sep-icon {
    margin-left: 11px;
}

.btn {
    height: 24px;
    border: 1px solid #4b678a;
    border-radius: 3px;
    background-color: #fff;
}

.btn-close {
    width: 58px;
    margin: 0 4px 0 3px;
}

.btn-save {
    width: 58px;
    border-color: #f4f4f4;
    background-color: #f4f4f4;
    color: #c8c8c8;
}

.btn-drop {
    width: 22px;
    height: 24px;
    border-radius: 0 3px 3px 0;
    background-color: #4b678a;
    color: #fff;
}

.panels {
    display: flex;
    flex: 1;
    min-height: 0;
}

/* Variables */
.variables {
    display: flex;
    flex-direction: column;
    position: relative;
    width: 179px;
    border-right: 1px solid #c4c4c4;
}

.var-head {
    display: flex;
    align-items: center;
    height: 35px;
    padding: 0 16px 2px 15px;
}

h2 {
    flex: 1;
    color: #333;
    font-size: 13px;
}

.var-head .sep {
    margin: 0 7px 0 10px;
}

.var-search {
    height: 28px;
    margin: 0 12px 14px 15px;
    padding: 0 7px 1px;
    border: 1px solid #bfbfbf;
    border-radius: 3px;
    color: #333;
    font-family: inherit;
    font-size: 12px;
}

.var-search::placeholder {
    color: #9b9b9b;
}

.var-group {
    display: flex;
    align-items: center;
    gap: 6px;
    height: 23px;
    padding-left: 7px;
}

.var-list {
    display: grid;
    grid-auto-rows: 1fr;
    height: 195px;
    padding: 0 8px 0 18px;
}

.var-list li {
    display: flex;
    align-items: center;
    gap: 6px;
}

.var-list a {
    flex: 1;
}

h3 {
    padding-left: 15px;
    color: #333;
    font-size: 12px;
    font-weight: normal;
    line-height: 20px;
}

.pre-list li {
    display: flex;
    align-items: center;
    gap: 6px;
    height: 22px;
    padding-left: 21px;
}

.fold {
    display: flex;
    align-items: center;
    height: 34px;
    padding: 0 12px 4px 15px;
    border-top: 1px solid #d9d9d9;
}

.fold-first {
    margin-top: auto;
}

.fold:last-of-type {
    border-bottom: 1px solid #d9d9d9;
}

.fold a {
    font-size: 11px;
}

/* Drag handle over the panel border */
.grip {
    position: absolute;
    z-index: 1;
    top: 249px;
    right: -3px;
    width: 4px;
    height: 23px;
    border-radius: 2px;
    background-color: #4b678a;
}

/* Flow */
.flow {
    display: flex;
    flex-direction: column;
    flex: 1;
    min-width: 0;
    position: relative;
    border-right: 1px solid #c4c4c4;
}

.flow-bar {
    display: flex;
    align-items: center;
    height: 36px;
    padding-left: 10px;
    border-bottom: 1px solid #cbcbcb;
}

.flow-bar button {
    width: 23px;
}

.flow-bar .rec {
    width: 22px;
    height: 22px;
    border-radius: 50%;
    background-color: #4b678a;
}

.flow-bar .off {
    color: #c9c9c9;
}

.flow-bar .del {
    color: #c4103f;
}

.views {
    display: flex;
    gap: 14px;
    margin-left: auto;
    padding: 6px 16px 0 0;
    color: #333;
}

.canvas {
    position: relative;
    flex: 1;
    padding: 13px 17px 0 0;
    background-color: #f4f4f4;
}

.edge-row {
    display: flex;
    align-items: center;
    gap: 16px;
    height: 26px;
    padding: 0 0 2px 47px;
    color: #8f8f8f;
    font-size: 12px;
    font-weight: bold;
}

.edge-end {
    gap: 19px;
    padding-left: 44px;
}

/* The two gradients are the guides of the Try and Catch blocks */
.lines {
    padding-bottom: 3px;
    background:
        linear-gradient(#dadada, #dadada) 35px 22px / 1px 428px no-repeat,
        linear-gradient(#dadada, #dadada) 57px 372px / 1px 71px no-repeat;
}

.line {
    display: flex;
    align-items: center;
    margin-bottom: 5px;
}

.open {
    margin-bottom: 6px;
}

.branch {
    margin-top: -2px;
}

.no {
    width: 24px;
    margin-right: 4px;
    padding-right: 5px;
    color: #333;
    font-size: 11px;
    font-weight: bold;
    line-height: 15px;
    text-align: right;
}

/* Breakpoint flag */
.stop .no {
    width: 23px;
    margin: 0 1px 0 4px;
    padding-right: 8px;
    background-color: #a2c6df;
    clip-path: polygon(0 0, 80% 0, 100% 50%, 80% 100%, 0 100%);
}

.fold-mark {
    display: flex;
    justify-content: center;
    width: 16px;
    color: #b9c0bf;
}

.d1 .fold-mark { margin-left: 21px; }
.d2 .fold-mark { margin-left: 43px; }
.d3 .fold-mark { margin-left: 64px; }
.d4 .fold-mark { margin-left: 86px; }

.node {
    display: flex;
    align-items: center;
    gap: 6px;
    flex: 1;
    min-width: 0;
    position: relative;
    height: 27px;
    padding: 0 7px 1px;
    border: 1px solid #c6c6c6;
    border-radius: 3px;
    background-color: #fff;
}

.node p {
    flex: 1;
    min-width: 0;
    white-space: nowrap;
    color: #6b6b6b;
}

.node b {
    color: #2a2a2a;
    font-weight: 600;
}

.node i,
.node em {
    color: #4b678a;
    font-size: 12px;
    font-style: normal;
    font-weight: bold;
}

.node em {
    color: #5a5a5a;
}

.node .kw {
    color: #f37f4d;
}

.red { color: #e0604c; }
.yellow { color: #f0d735; }

.selected {
    border-color: #1b3a5f;
    box-shadow: inset 3px 0 0 #1b3a5f;
}

.add-here {
    position: absolute;
    left: 50%;
    bottom: -9px;
    width: 18px;
    height: 18px;
    margin-left: -9px;
    border: 1px solid #4b678a;
    border-radius: 50%;
    background-color: #f4f4f4;
}

.platform {
    display: flex;
    align-items: center;
    gap: 4px;
    position: absolute;
    right: 6px;
    bottom: 7px;
    padding: 0 7px 0 6px;
    border-radius: 8px;
    background-color: #fff;
    color: #333;
    font-size: 12px;
    line-height: 16px;
}

/* Action properties */
.props {
    position: relative;
    width: 405px;
    padding: 0 24px 0 14px;
    color: #4a4a4a;
    font-size: 12px;
}

.props-head {
    display: flex;
    align-items: center;
    height: 34px;
    margin: 0 -4px 10px 0;
    padding: 0 0 2px 1px;
    color: #4b678a;
}

.note {
    padding-left: 1px;
    line-height: 21px;
    color: #6f6f6f;
    font-size: 11px;
    white-space: nowrap;
}

.props label {
    display: block;
    padding-left: 4px;
    color: #333;
    font-size: 11px;
    line-height: 16px;
}

.note + label {
    margin-top: 2px;
}

.path-row {
    display: flex;
    align-items: center;
    gap: 4px;
    margin-bottom: 5px;
    padding-left: 8px;
    border-left: 1px solid #c6c6c6;
}

.field {
    display: flex;
    align-items: center;
    height: 29px;
    padding: 0 12px 0 11px;
    border: 1px solid #c0c0c0;
    border-radius: 3px;
    color: #4b678a;
}

.field .q {
    color: #c4c8cc;
}

.field input {
    flex: 1;
    min-width: 0;
    padding: 0 8px 2px;
    border: 0;
    outline: 0;
    background: none;
    color: #4a4a4a;
    font-family: inherit;
    font-size: 13px;
}

.field-path {
    align-items: flex-start;
    width: 270px;
    height: 38px;
    padding-top: 4px;
}

.field-path .q {
    margin-top: 2px;
}

.path-text {
    flex: 1;
    min-width: 0;
}

.path-text input {
    width: 100%;
    padding: 0 0 0 7px;
    color: #3f638c;
    font-weight: bold;
}

.hscroll {
    display: flex;
    align-items: center;
    gap: 4px;
    padding: 7px 13px 0 12px;
    fill: #8c8c8c;
}

.hscroll span {
    width: 76px;
    height: 6px;
    margin-left: auto;
    border-radius: 3px;
    background-color: #8c8c8c;
}

.ins {
    width: 20px;
    font-size: 11px;
    font-weight: bold;
}

.field-path .ins {
    margin-top: 11px;
}

.btn-browse {
    width: 76px;
    padding-bottom: 1px;
    font-size: 13px;
    color: #4b678a;
}

.check {
    display: flex;
    align-items: center;
    gap: 3px;
    height: 18px;
    margin: 11px 0 4px 8px;
}

.props .check label {
    color: #4a4a4a;
}

.check input {
    appearance: none;
    width: 14px;
    height: 14px;
    margin: 0;
    border: 1px solid #c0c0c0;
    background-color: #fff;
}

.check input[type="radio"] {
    border-radius: 50%;
}

.check input:checked {
    border-color: #b0bccb;
    background: radial-gradient(circle, #2b5180 0 4px, #fff 5px);
}

.legend {
    padding-left: 4px;
    color: #333;
    font-size: 11px;
    line-height: 18px;
}

.legend + .check {
    margin-top: 4px;
}

.check-last {
    margin-bottom: 11px;
}

.field-select {
    padding: 0 10px 0 7px;
}

.field-select select {
    appearance: none;
    align-self: flex-start;
    flex: 1;
    height: 23px;
    padding: 0;
    border: 0;
    background: none;
    color: #4a4a4a;
    font-family: inherit;
    font-size: 12px;
}

.vscroll {
    position: absolute;
    top: 47px;
    right: 2px;
    width: 6px;
    height: 333px;
    border-radius: 3px;
    background-color: #8c8c8c;
}

.arrow-up {
    position: absolute;
    top: 40px;
    right: 2px;
}

.arrow-down {
    position: absolute;
    right: 2px;
    bottom: 5px;
}

.guide {
    position: absolute;
    right: 14px;
    bottom: 14px;
    width: 45px;
    height: 45px;
    border-radius: 50%;
    background-color: #fd5b12;
    box-shadow: 0 1px 5px rgba(0, 0, 0, 0.3);
}

.guide span {
    position: absolute;
    top: -3px;
    left: -12px;
    width: 25px;
    height: 23px;
    border-radius: 50%;
    background-color: #0e7ea6;
    box-shadow: 0 0 0 5px rgba(14, 126, 166, 0.22);
    color: #fff;
    font-size: 13px;
    font-weight: bold;
    line-height: 22px;
}

/* Taskbar */
.taskbar {
    display: flex;
    align-items: center;
    flex-shrink: 0;
    height: 48px;
    border-top: 1px solid #2e3f4a;
    background: linear-gradient(to right, #122735 20%, #15273a 35%, #242323 45%, #242326 62%, #14293a 80%);
    color: #fff;
    font-size: 11px;
    line-height: 16px;
}

.weather {
    display: flex;
    align-items: center;
    gap: 4px;
    flex: 1;
    padding: 0 0 8px 18px;
}

.weather p {
    padding-top: 6px;
}

.weather span {
    color: #c8ced3;
}

.badge-text {
    fill: #222;
    font-size: 12px;
    text-anchor: middle;
}

.pins {
    display: flex;
    align-items: center;
    padding-bottom: 1px;
}

.pins button {
    width: 40px;
    height: 40px;
    margin: 0 2px;
    border-radius: 4px;
}

.search {
    display: flex;
    align-items: center;
    gap: 8px;
    width: 220px;
    height: 32px;
    margin: 0 2px;
    padding: 0 10px;
    border: 1px solid #4c555b;
    border-radius: 16px;
    background-color: #3a4046;
}

.search input {
    width: 150px;
    padding: 0;
    border: 0;
    background: none;
    font-family: inherit;
    font-size: 13px;
}

.search input::placeholder {
    color: #d0d3d6;
}

.pins .running {
    background: linear-gradient(#ee8577, #ee8577) 50% 100% / 14px 3px no-repeat #2b3640;
}

.pins .open-app {
    background: linear-gradient(#8d959b, #8d959b) 50% 100% / 5px 3px no-repeat;
}

.tray {
    display: flex;
    align-items: center;
    justify-content: flex-end;
    gap: 16px;
    flex: 1;
    padding-right: 18px;
    font-size: 12px;
    text-align: right;
}

.status {
    display: flex;
    gap: 6px;
}
```
